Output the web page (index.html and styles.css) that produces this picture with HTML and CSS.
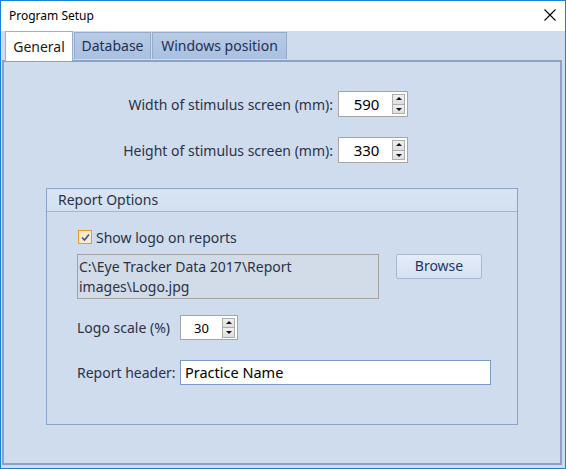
FILE: index.html
```html
<!DOCTYPE html>
<html>
<head>
<meta charset="utf-8">
<link rel="stylesheet" href="styles.css">
</head>
<body>
<div class="window">
  <div class="titlebar">
    <span class="title">Program Setup</span>
    <svg class="close" width="12" height="12" viewBox="0 0 12 12"><path d="M0.5 0.5 L11.5 11.5 M11.5 0.5 L0.5 11.5" stroke="#000" stroke-width="1.1" fill="none"/></svg>
  </div>
  <div class="client">
    <div class="tabs">
      <div class="tab selected t1">General</div>
      <div class="tab t2">Database</div>
      <div class="tab t3">Windows position</div>
    </div>
    <div class="panel">
      <div class="row first">
        <span class="label">Width of stimulus screen (mm):</span>
        <div class="spin">
          <span class="val">590</span>
          <div class="btns"><span class="btn up"></span><span class="btn down"></span></div>
        </div>
      </div>
      <div class="row second">
        <span class="label">Height of stimulus screen (mm):</span>
        <div class="spin">
          <span class="val">330</span>
          <div class="btns"><span class="btn up"></span><span class="btn down"></span></div>
        </div>
      </div>
      <div class="group">
        <div class="group-head">Report Options</div>
        <div class="group-body">
          <label class="check">
            <span class="box"><svg width="9" height="9" viewBox="0 0 9 9"><path d="M1 4.5 L3.5 7 L8 1.5" stroke="#2e55a8" stroke-width="1.6" fill="none"/></svg></span>
            <span>Show logo on reports</span>
          </label>
          <div class="pathrow">
            <div class="pathbox">C:\Eye Tracker Data 2017\Report images\Logo.jpg</div>
            <div class="button">Browse</div>
          </div>
          <div class="scalerow">
            <span class="lbl">Logo scale (%)</span>
            <div class="spin small">
              <span class="val">30</span>
              <div class="btns"><span class="btn up"></span><span class="btn down"></span></div>
            </div>
          </div>
          <div class="headerrow">
            <span class="lbl">Report header:</span>
            <div class="textbox">Practice Name</div>
          </div>
        </div>
      </div>
    </div>
  </div>
</div>
</body>
</html>
```
FILE: styles.css
```css
* { box-sizing: border-box; }
html, body { margin: 0; padding: 0; }
body {
  width: 566px;
  height: 469px;
  font-family: "Noto Sans", "Open Sans", sans-serif;
  background: #cfdcee;
}
.window {
  width: 566px;
  height: 469px;
  border: 1px solid #1883d7;
  display: flex;
  flex-direction: column;
  background: #cfdcee;
}
.titlebar {
  height: 30px;
  background: #fff;
  display: flex;
  align-items: center;
  justify-content: space-between;
  padding: 0 9px 0 8px;
  flex: none;
}
.title {
  font-size: 12px;
  color: #000;
  margin-top: -2px;
}
.close { margin-top: -2px; margin-right: 0; }
.client {
  flex: 1;
  display: flex;
  flex-direction: column;
  padding: 0 3px 3px 1px;
}
.tabs {
  display: flex;
  height: 29px;
  padding-left: 3px;
  align-items: flex-end;
  position: relative;
  z-index: 2;
}
.tab {
  height: 27px;
  border: 1px solid #95abcc;
  border-bottom: none;
  background: linear-gradient(#b8cbe6, #a9c0df);
  color: #1f3052;
  font-size: 14px;
  line-height: 25px;
  text-align: center;
  margin-right: 1px;
  margin-bottom: 1px;
}
.t1 { width: 68px; }
.t2 { width: 77px; }
.t3 { width: 135px; }
.tab.selected {
  height: 30px;
  background: #fff;
  color: #1a1a1a;
  border-color: #9aafcf;
  padding-top: 2px;
  margin-bottom: -1px;
}
.panel {
  flex: 1;
  border: 2px solid #8ba2c6;
  background: #cfdcee;
  padding: 29px 0 0 0;
  display: flex;
  flex-direction: column;
}
.row {
  display: flex;
  align-items: center;
  height: 26px;
}
.row.second { margin-top: 20px; }
.label {
  width: 334px;
  text-align: right;
  padding-right: 5px;
  font-size: 14px;
  color: #2b3245;
}
.spin {
  width: 70px;
  height: 26px;
  border: 1px solid #a6a6a6;
  background: #fff;
  display: flex;
  align-items: center;
}
.spin .val {
  flex: 1;
  text-align: center;
  font-size: 15px;
  color: #000;
  padding-left: 2px;
}
.btns {
  width: 13px;
  height: 20px;
  margin-right: 2px;
  display: flex;
  flex-direction: column;
}
.btn {
  flex: 1;
  border: 1px solid #adadad;
  background: linear-gradient(#f0f0f0, #dedede);
  position: relative;
}
.btn.down { border-top: none; }
.btn::after {
  content: "";
  position: absolute;
  left: 50%;
  top: 50%;
  margin-left: -3px;
  border-left: 3px solid transparent;
  border-right: 3px solid transparent;
}
.btn.up::after { border-bottom: 3px solid #111; margin-top: -2px; }
.btn.down::after { border-top: 3px solid #111; margin-top: -1px; }
.group {
  margin: 25px 0 0 42px;
  width: 472px;
  height: 237px;
  border: 1px solid #8aa4c9;
  display: flex;
  flex-direction: column;
}
.group-head {
  height: 23px;
  background: linear-gradient(#d9e5f5, #d3e0f1);
  border-bottom: 1px solid #9fb5d6;
  font-size: 14px;
  color: #2b3245;
  padding-left: 11px;
  line-height: 22px;
}
.group-body {
  padding: 17px 0 0 30px;
  display: flex;
  flex-direction: column;
}
.check {
  display: flex;
  align-items: center;
  font-size: 14px;
  color: #2b3245;
  height: 16px;
}
.box {
  width: 14px;
  height: 14px;
  border: 1px solid #e59a2b;
  background: #fbe9c8;
  display: flex;
  align-items: center;
  justify-content: center;
  margin: 0 4px 0 1px;
}
.pathrow {
  display: flex;
  margin-top: 9px;
  align-items: flex-start;
}
.pathbox {
  width: 302px;
  height: 45px;
  border: 1px solid #a2a2a2;
  background: #d2dbe8;
  font-size: 14px;
  line-height: 20px;
  color: #2b3245;
  padding: 2px 0 0 1px;
}
.button {
  margin-left: 17px;
  width: 86px;
  height: 25px;
  border: 1px solid #a9b8cf;
  border-radius: 2px;
  background: linear-gradient(#e4edf9, #d6e2f2);
  text-align: center;
  font-size: 14px;
  line-height: 22px;
  color: #1d3566;
}
.scalerow {
  display: flex;
  align-items: center;
  margin-top: 16px;
}
.lbl {
  width: 103px;
  font-size: 14px;
  color: #2b3245;
}
.spin.small {
  width: 58px;
  height: 25px;
}
.spin.small .val { font-size: 13px; padding-left: 0; }
.headerrow {
  display: flex;
  align-items: center;
  margin-top: 20px;
}
.textbox {
  width: 311px;
  height: 25px;
  border: 1px solid #7f9ac2;
  background: #fff;
  font-size: 14.5px;
  color: #000;
  padding-left: 4px;
  line-height: 23px;
}
```
